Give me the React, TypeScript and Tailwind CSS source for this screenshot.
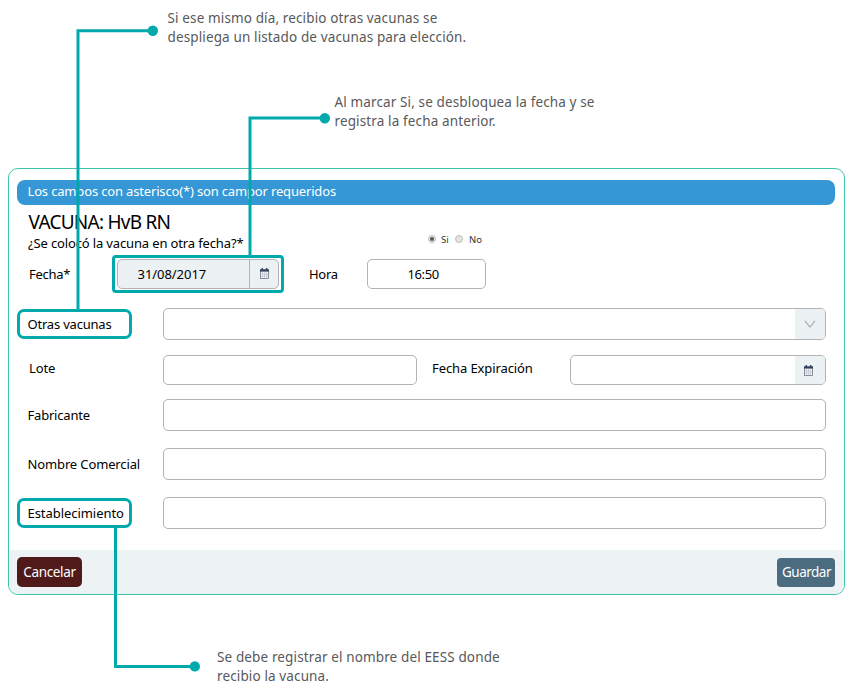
import React from "react";

const CalendarIcon = () => (
  <svg width="9" height="11" viewBox="0 0 9 11" className="block shrink-0">
    <rect x="0.5" y="2" width="8" height="8.5" fill="#fafbfc" stroke="#6a7183" strokeWidth="0.8" />
    <rect x="0" y="1.4" width="9" height="2.2" fill="#34405a" />
    <path d="M2.3 0v2M6.7 0v2" stroke="#34405a" strokeWidth="1.4" />
    <path d="M2.6 4v6.3M4.5 4v6.3M6.4 4v6.3M0.6 5.9h7.8M0.6 8.1h7.8" stroke="#a4abb8" strokeWidth="0.5" />
  </svg>
);

type BoxProps = { className?: string; children?: React.ReactNode };

const Field = ({ className = "", children }: BoxProps) => (
  <div className={`flex shrink-0 overflow-hidden rounded-[5px] border border-[#b3b3b3] ${className}`}>{children}</div>
);

const Text = ({ className = "", children }: BoxProps) => (
  <span className={`block shrink-0 whitespace-nowrap ${className}`}>{children}</span>
);

const Note = ({ className = "", lines }: { className?: string; lines: string[] }) => (
  <div className={`shrink-0 text-[13.5px] leading-[19px] tracking-[0.13px] text-[#58595b] ${className}`}>
    {lines.map((line) => (
      <Text key={line}>{line}</Text>
    ))}
  </div>
);

const Radio = ({ checked = false }: { checked?: boolean }) => (
  <span className="flex h-2 w-2 shrink-0 items-center justify-center rounded-full border border-[#bcbcbc] bg-[#e4e4e4]">
    {checked && <span className="h-1 w-1 rounded-full bg-[#555555]" />}
  </span>
);

const Highlight = ({ children }: { children: React.ReactNode }) => (
  <div className="ml-2 flex h-[30px] w-[115px] shrink-0 items-center rounded-[7px] border-[3px] border-[#00a9ac] pl-[7.5px]">
    {children}
  </div>
);

export default function App() {
  return (
    <div className="relative flex h-[696px] w-[851px] flex-col overflow-hidden bg-white font-['Noto_Sans','Open_Sans',sans-serif] text-[13px] leading-5 text-black">
      <Note
        className="ml-[167.5px] mt-[9px]"
        lines={["Si ese mismo día, recibio otras vacunas se", "despliega un listado de vacunas para elección."]}
      />
      <Note
        className="ml-[334.5px] mt-[46px]"
        lines={["Al marcar Si, se desbloquea la fecha y se", "registra la fecha anterior."]}
      />

      <div className="ml-2 mt-[37px] flex h-[427px] w-[837px] shrink-0 flex-col overflow-hidden rounded-[10px] border border-[#3cc5a6]">
        <div className="ml-2 mt-[11px] flex h-[25px] w-[818px] shrink-0 items-center rounded-[8px] bg-[#3597d5] pb-[4px] pl-[10.5px] text-white">
          <Text className="tracking-[-0.16px]">Los campos con asterisco(*) son campor requeridos</Text>
        </div>

        <Text className="ml-[19.5px] mt-[6px] h-[22px] text-[19px] leading-[22px] tracking-[-0.75px]">VACUNA: HvB RN</Text>

        <div className="flex h-5 shrink-0 items-center pl-[19px]">
          <Text className="w-[399.5px] tracking-[-0.14px]">¿Se colocó la vacuna en otra fecha?*</Text>
          <div className="mb-[8px] flex items-center text-[9.5px] leading-[10px] text-[#333333]">
            <Radio checked />
            <Text className="ml-[5.5px] mt-[2px] w-[14px]">Si</Text>
            <Radio />
            <Text className="ml-[6px] mt-[2px]">No</Text>
          </div>
        </div>

        <div className="mt-[2px] flex h-[38px] shrink-0 items-center">
          <Text className="w-[103px] pb-[1px] pl-[20px] tracking-[-0.3px]">Fecha*</Text>
          <div className="flex h-[38px] w-[172px] shrink-0 items-center justify-center rounded-[4px] border-[3px] border-[#00a9ac]">
            <Field className="h-[30px] w-[162px] bg-[#ecf1f4]">
              <Text className="w-[132px] border-r border-[#b3b3b3] pl-[19.5px] leading-[28px] tracking-[-0.05px]">31/08/2017</Text>
              <div className="flex flex-1 items-center justify-center pb-[2px]">
                <CalendarIcon />
              </div>
            </Field>
          </div>
          <Text className="w-[83px] pb-[1px] pl-[25px] tracking-[-0.3px]">Hora</Text>
          <Field className="h-[30px] w-[119px] bg-white">
            <Text className="pl-[39.5px] leading-[28px] tracking-[-0.4px]">16:50</Text>
          </Field>
        </div>

        <div className="mt-[15px] flex h-8 shrink-0 items-center">
          <Highlight>
            <Text className="tracking-[-0.2px]">Otras vacunas</Text>
          </Highlight>
          <Field className="ml-[31px] h-8 w-[663px] justify-end bg-white">
            <div className="flex w-[30px] items-center justify-center bg-[#ecf1f4]">
              <svg width="12" height="8" viewBox="0 0 12 8" fill="none" stroke="#aaaaaa" strokeWidth="1.1">
                <path d="M1 0.8L6 7L11 0.8" />
              </svg>
            </div>
          </Field>
        </div>

        <div className="mt-[15px] flex h-[30px] shrink-0 items-center">
          <Text className="w-[154px] pb-[4px] pl-[20px] tracking-[-0.15px]">Lote</Text>
          <Field className="h-[30px] w-[254px] bg-white" />
          <Text className="w-[153px] pb-[4px] pl-[15px] tracking-[-0.1px]">Fecha Expiración</Text>
          <Field className="h-[30px] w-[256px] justify-end bg-white">
            <div className="flex w-[30px] items-center justify-center bg-[#ecf1f4] pr-[3px]">
              <CalendarIcon />
            </div>
          </Field>
        </div>

        <div className="mt-[14px] flex h-8 shrink-0 items-center">
          <Text className="w-[154px] pl-[18.5px] tracking-[-0.2px]">Fabricante</Text>
          <Field className="h-8 w-[663px] bg-white" />
        </div>

        <div className="mt-[17px] flex h-8 shrink-0 items-center">
          <Text className="w-[154px] pl-[18.5px] tracking-[-0.13px]">Nombre Comercial</Text>
          <Field className="h-8 w-[663px] bg-white" />
        </div>

        <div className="mt-[17px] flex h-8 shrink-0 items-center">
          <Highlight>
            <Text className="tracking-[-0.05px]">Establecimiento</Text>
          </Highlight>
          <Field className="ml-[31px] h-8 w-[663px] bg-white" />
        </div>

        <div className="mt-auto flex h-[44px] shrink-0 items-center justify-between bg-[#edf2f5] pl-2 pr-[9px] text-[13.5px] text-white">
          <div className="flex h-[30px] w-[65px] items-center justify-center rounded-[5px] bg-[#501a1a]">
            <Text className="tracking-[-0.35px]">Cancelar</Text>
          </div>
          <div className="flex h-[29px] w-[58px] items-center justify-center rounded-[4px] bg-[#4b6b7f] pl-[1px]">
            <Text className="tracking-[-0.5px]">Guardar</Text>
          </div>
        </div>
      </div>

      <Note
        className="ml-[217px] mt-[53px]"
        lines={["Se debe registrar el nombre del EESS donde", "recibio la vacuna."]}
      />

      <svg className="pointer-events-none absolute inset-0" width="851" height="696" viewBox="0 0 851 696" fill="none">
        <g stroke="#00a9ac" strokeWidth="3">
          <path d="M152 30.7H78V310" />
          <path d="M324 118H250V257" />
          <path d="M115.5 527V666.5H194" />
        </g>
        <g fill="#00a9ac">
          <circle cx="152.8" cy="30.8" r="5.2" />
          <circle cx="324.8" cy="118.2" r="5.2" />
          <circle cx="194.8" cy="666.4" r="5.2" />
        </g>
      </svg>
    </div>
  );
}
